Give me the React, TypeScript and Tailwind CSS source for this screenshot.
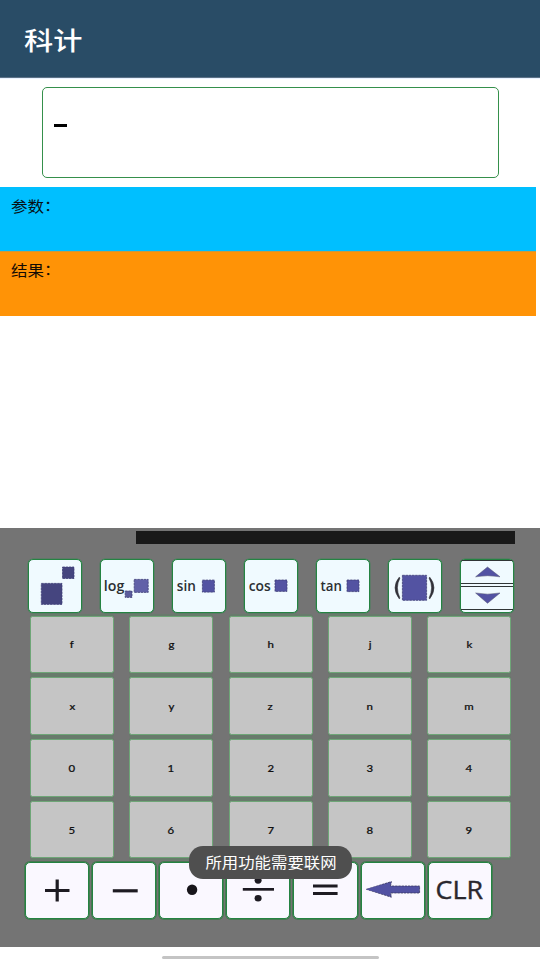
import React from 'react';

const letterRows = [
  ['f', 'g', 'h', 'j', 'k'],
  ['x', 'y', 'z', 'n', 'm'],
  ['0', '1', '2', '3', '4'],
  ['5', '6', '7', '8', '9'],
];

function Slot({ x, y, w, h, fill = '#5353a2' }: { x: number; y: number; w: number; h: number; fill?: string }) {
  return (
    <rect x={x} y={y} width={w} height={h} fill={fill} stroke="#404078" strokeWidth="0.8" strokeDasharray="2.4 0.8" />
  );
}

function Label({ x, y, w, children }: { x: number; y: number; w: number; children: string }) {
  return (
    <text x={x} y={y} textLength={w} lengthAdjust="spacingAndGlyphs" fontSize="15" fontWeight="600" fill="#2b2f33">
      {children}
    </text>
  );
}

const functionIcons = [
  <>
    <Slot x={34.5} y={8} w={11.5} h={11.5} fill="#45457f" />
    <Slot x={13.3} y={24.4} w={20.7} h={21} fill="#45457f" />
  </>,
  <>
    <Label x={3.8} y={32.2} w={20.5}>log</Label>
    <Slot x={25.2} y={32} w={6.8} h={6.4} fill="#5c5c9c" />
    <Slot x={34.2} y={20.4} w={14} h={13} fill="#6161a8" />
  </>,
  <>
    <Label x={4.8} y={32.4} w={19}>sin</Label>
    <Slot x={30.4} y={21.1} w={12} h={12} />
  </>,
  <>
    <Label x={4.7} y={32} w={22}>cos</Label>
    <Slot x={31} y={21} w={12} h={11.4} />
  </>,
  <>
    <Label x={4.5} y={32.4} w={21.3}>tan</Label>
    <Slot x={31} y={21} w={12} h={11.6} />
  </>,
  <>
    <path d="M11.2 18.2Q2.9 28.5 11.2 39.8L12 39.2Q6.8 28.5 12 18.9Z" fill="#303038" stroke="#303038" strokeWidth="0.6" />
    <Slot x={14.4} y={16.3} w={24.2} h={25} />
    <path d="M41.8 18.2Q50.1 28.5 41.8 39.8L41 39.2Q46.2 28.5 41 18.9Z" fill="#303038" stroke="#303038" strokeWidth="0.6" />
  </>,
  <>
    <path d="M1.5 1.5H52.5M1 24.5H53M1 27.5H53M1 50.5H53" stroke="#303536" strokeWidth="1" />
    <path d="M15.6 17.8L27.5 8L40 17.8Q27.5 15.6 15.6 17.8Z" fill="#5252a3" stroke="#50506e" strokeWidth="0.5" />
    <path d="M15.6 34L27.5 44.3L40 34Q27.5 36.3 15.6 34Z" fill="#5252a3" stroke="#50506e" strokeWidth="0.5" />
  </>,
];

const operationIcons = [
  <path d="M20 28.5H44.5M32.2 17.4V39.6" stroke="#1d1b22" strokeWidth="3.2" />,
  <path d="M20.8 28.8H45.7" stroke="#1d1b22" strokeWidth="3.2" />,
  <circle cx="33.1" cy="27.8" r="5.2" fill="#17151b" />,
  <g fill="#1d1b22">
    <path d="M16.8 26H48V28.7H16.8Z" />
    <ellipse cx="32.1" cy="18.3" rx="3.5" ry="3.4" />
    <ellipse cx="32.1" cy="36.3" rx="3.5" ry="3.2" />
  </g>,
  <path d="M20 24H44.6M20 31.5H44.6" stroke="#1d1b22" strokeWidth="2.8" />,
  <g>
    <path d="M5.4 27.3L30.4 19.6L29.6 24H58.6V31H29.6L30.4 35.2Z" fill="#5252a3" stroke="#393960" strokeWidth="0.8" strokeDasharray="2.4 0.8" />
    <path d="M5.4 27.3L22 22.4V32Z" fill="#5252a3" />
  </g>,
  <text x="7.5" y="36.8" textLength="47.5" lengthAdjust="spacingAndGlyphs" fontSize="25.5" fontWeight="400" fill="#2a272e" stroke="#2a272e" strokeWidth="0.4">
    CLR
  </text>,
];

export default function App() {
  return (
    <div className="relative flex h-[960px] w-[540px] flex-col overflow-hidden bg-white font-['Noto_Sans_CJK_SC',sans-serif] text-black">
      <header className="flex h-[78px] shrink-0 items-center border-b border-[#5c7186] bg-[#294c66] pt-[4px] pl-[24px]">
        <h1 className="origin-left scale-x-[1.19] text-[24.5px] leading-none font-medium text-white">科计</h1>
      </header>

      <div className="flex h-[109px] shrink-0 border-t border-[#e8f2ff] pt-2 pl-[42px]">
        <div className="h-[91px] w-[457px] rounded-[5px] border border-[#35904b] pt-[36px] pl-[11px]">
          <div className="h-[2.5px] w-[13px] bg-black" />
        </div>
      </div>

      <div className="h-[64px] w-[536px] shrink-0 bg-[#00bfff] pt-[11px] pl-[11px]">
        <p className="w-fit origin-left scale-x-[1.14] text-[14.5px] leading-[16px] text-[#071014]">参数<span className="inline-block -translate-y-px">：</span></p>
      </div>
      <div className="h-[64.5px] w-[536px] shrink-0 border-t border-[#c9993f] bg-[#ff9306] pt-[10px] pl-[11px]">
        <p className="w-fit origin-left scale-x-[1.14] text-[14.5px] leading-[16px] text-[#140b04]">结果<span className="inline-block -translate-y-px">：</span></p>
      </div>

      <main className="mt-[212.5px] h-[419px] w-full shrink-0 bg-[#747474] pt-[2.5px]">
        <div className="ml-[136px] h-[13.5px] w-[378.5px] bg-[#191919]" />

        <div className="mt-[15px] ml-[28px] flex gap-[18px]">
          {functionIcons.map((icon, i) => (
            <button key={i} className="h-[54px] w-[54px] shrink-0 rounded-[5px] border border-[#248342] bg-[#f0faff] shadow-[0_0_0_0.5px_#47805a]">
              <svg viewBox="1 1 52 52" className="block h-[52px] w-[52px] font-['Open_Sans',sans-serif]">
                {icon}
              </svg>
            </button>
          ))}
        </div>

        <div className="mt-[2.6px] ml-[30px] flex w-[481px] flex-col gap-[4.7px]">
          {letterRows.map((row, i) => (
            <div key={i} className="flex gap-[15.25px]">
              {row.map((letter) => (
                <button
                  key={letter}
                  className="flex h-[57.2px] w-[84px] shrink-0 items-center justify-center rounded-[2.5px] border border-[#6ea677] bg-[#c5c5c5] shadow-[0_-2px_0_#687b6c,0_2px_0_#687b6c]"
                >
                  <span className="translate-y-[0.5px] scale-x-[1.2] font-['Lato',sans-serif] text-[9.5px] leading-none font-medium text-[#101010] [-webkit-text-stroke:0.2px_#101010]">{letter}</span>
                </button>
              ))}
            </div>
          ))}
        </div>

        <div className="mt-[3.3px] ml-[24.6px] flex gap-[3px]">
          {operationIcons.map((icon, i) => (
            <button key={i} className="h-[57px] w-[64.2px] shrink-0 rounded-[5px] border border-[#248342] bg-[#faf8ff] shadow-[0_0_0_1px_#467a52]">
              <svg viewBox="1 1 62.2 55" className="block h-[55px] w-[62.2px] font-['Open_Sans',sans-serif]">
                {icon}
              </svg>
            </button>
          ))}
        </div>
      </main>

      <div className="mt-[9px] ml-[162px] h-[3px] w-[217px] rounded-full bg-[#c4c4c4]" />

      <div className="absolute top-[846px] left-[189px] flex h-[33px] w-[163px] items-center justify-center rounded-[14px] bg-[#4f4f4f]">
        <span className="-translate-y-[0.5px] scale-x-[1.13] text-[14.5px] leading-none whitespace-nowrap text-white">所用功能需要联网</span>
      </div>
    </div>
  );
}
